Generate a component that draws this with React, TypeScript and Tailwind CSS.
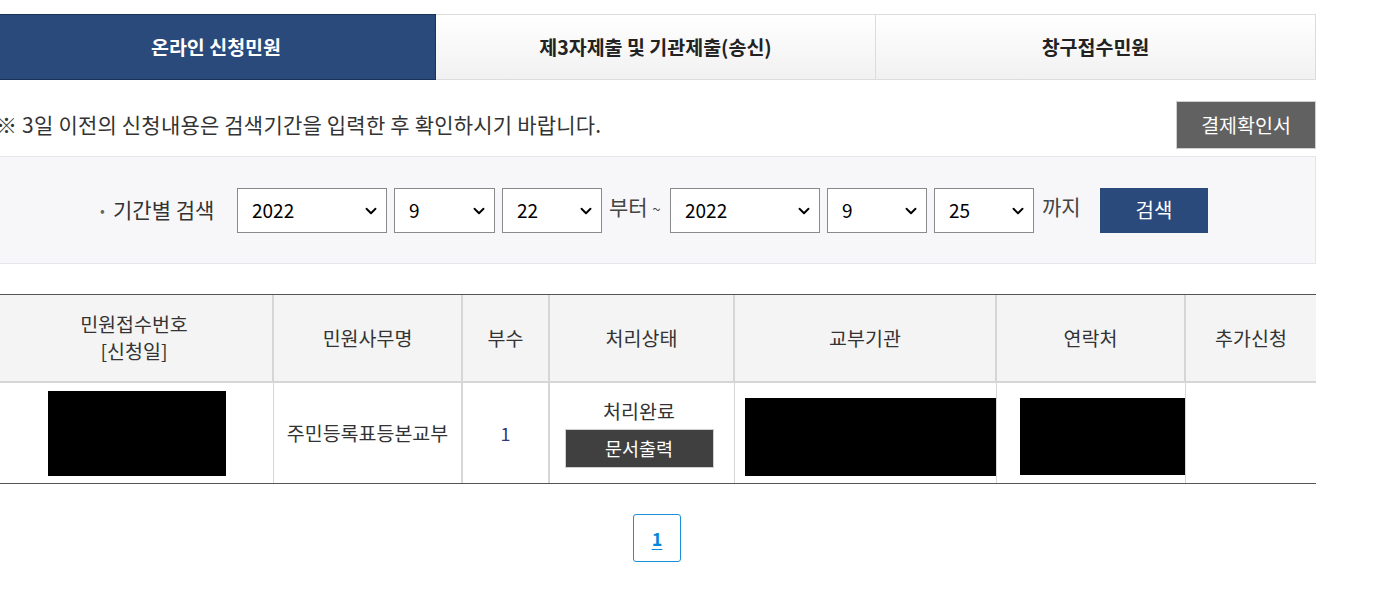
import { ChevronDown } from "lucide-react";

const font = { fontFamily: '"Noto Sans CJK KR", "Noto Sans", sans-serif' };

const tabs = ["온라인 신청민원", "제3자제출 및 기관제출(송신)", "창구접수민원"];

const Select = ({ value, width }: { value: string; width: string }) => (
  <div
    className={`relative flex h-[45px] items-center border border-[#8a8a8a] bg-white pl-[14px] text-[19px] text-black ${width}`}
  >
    <span>{value}</span>
    <ChevronDown
      size={18}
      strokeWidth={2.5}
      className="absolute right-[6px] top-[13px] text-black"
    />
  </div>
);

const cols = [
  "w-[278px]",
  "w-[189px]",
  "w-[87px]",
  "w-[185px]",
  "w-[262px]",
  "w-[189px]",
  "flex-1",
];

export default function App() {
  return (
    <div className="min-h-[591px] bg-white text-[#333]" style={font}>
      <div className="-ml-1 w-[1320px] pt-[14px]">
        {/* tabs */}
        <div className="grid h-[66px] grid-cols-3">
          {tabs.map((t, i) => (
            <div
              key={t}
              className={
                i === 0
                  ? "flex items-center justify-center border border-[#1b3358] bg-[#2a4a7c] text-[19.5px] font-bold text-white"
                  : "flex items-center justify-center border border-l-0 border-[#dcdcdc] bg-gradient-to-b from-white to-[#f1f1f1] text-[19.5px] font-bold text-[#222]"
              }
            >
              {t}
            </div>
          ))}
        </div>

        {/* notice */}
        <div className="mt-[21px] flex items-center justify-between">
          <p className="text-[21px] tracking-[0.2px] text-[#333]">
            ※ 3일 이전의 신청내용은 검색기간을 입력한 후 확인하시기 바랍니다.
          </p>
          <button
            type="button"
            className="h-[48px] w-[140px] border border-[#cfcfcf] bg-[#616161] text-[19.5px] text-white"
          >
            결제확인서
          </button>
        </div>

        {/* search */}
        <div className="mt-[7px] flex h-[108px] items-center border border-[#e6e6ea] bg-[#f7f7f9] pl-[103px]">
          <span className="w-[13px] text-[14px] text-[#666]">•</span>
          <span className="w-[124px] text-[21px] text-[#333]">기간별 검색</span>
          <div className="flex items-center gap-[7px]">
            <Select value="2022" width="w-[150px]" />
            <Select value="9" width="w-[101px]" />
            <Select value="22" width="w-[100px]" />
            <span className="w-[54px] whitespace-nowrap pb-[6px] text-[21px] text-[#444]">
              부터 <span className="text-[15px]">~</span>
            </span>
            <Select value="2022" width="w-[150px]" />
            <Select value="9" width="w-[100px]" />
            <Select value="25" width="w-[100px]" />
            <span className="w-[52px] pb-[6px] pl-[1px] text-[21px] text-[#444]">까지</span>
            <button
              type="button"
              className="h-[45px] w-[108px] bg-[#2a4a7c] text-[20px] text-white"
            >
              검색
            </button>
          </div>
        </div>

        {/* table */}
        <div className="mt-[30px] border-y border-[#555]">
          <div className="flex h-[88px] border-b-2 border-[#d6d6d6] bg-[#f4f4f4] text-[19.5px] text-[#333]">
            {[
              ["민원접수번호", "[신청일]"],
              ["민원사무명"],
              ["부수"],
              ["처리상태"],
              ["교부기관"],
              ["연락처"],
              ["추가신청"],
            ].map((h, i) => (
              <div
                key={h[0]}
                className={`${cols[i]} flex flex-col items-center justify-center pb-[2px] leading-[27px] ${i < 6 ? "border-r-2 border-[#d6d6d6]" : ""}`}
              >
                {h.map((l) => (
                  <span key={l}>{l}</span>
                ))}
              </div>
            ))}
          </div>
          <div className="flex h-[100px] text-[19.5px] text-[#333]">
            <div className={`${cols[0]} flex items-center justify-center border-r border-[#d6d6d6] pl-[4px]`}>
              <div className="h-[85px] w-[178px] bg-black" />
            </div>
            <div className={`${cols[1]} flex items-center justify-center border-r-2 border-[#d6d6d6]`}>
              주민등록표등본교부
            </div>
            <div className={`${cols[2]} flex items-center justify-center border-r-2 border-[#d6d6d6] text-[18px] text-[#2a3a7c]`}>
              1
            </div>
            <div className={`${cols[3]} flex flex-col items-center justify-center border-r border-[#d6d6d6] pr-[6px]`}>
              <span className="leading-[26px]">처리완료</span>
              <button
                type="button"
                className="mt-[5px] h-[39px] w-[149px] border border-[#cfcfcf] bg-[#404040] text-[18.5px] text-white"
              >
                문서출력
              </button>
            </div>
            <div className={`${cols[4]} flex items-start border-r border-[#d6d6d6] pl-[10px] pt-[15px]`}>
              <div className="h-[78px] w-[252px] bg-black" />
            </div>
            <div className={`${cols[5]} flex items-start justify-end border-r border-[#d6d6d6] pt-[15px]`}>
              <div className="h-[77px] w-[165px] bg-black" />
            </div>
            <div className={cols[6]} />
          </div>
        </div>

        {/* pagination */}
        <div className="mt-[30px] flex justify-center pl-[2px]">
          <a
            href="#"
            className="flex h-[48px] w-[48px] items-center justify-center rounded-[3px] border border-[#1a90d9] text-[18px] font-bold text-[#0a86d8] underline underline-offset-[3px]"
          >
            1
          </a>
        </div>
      </div>
    </div>
  );
}
